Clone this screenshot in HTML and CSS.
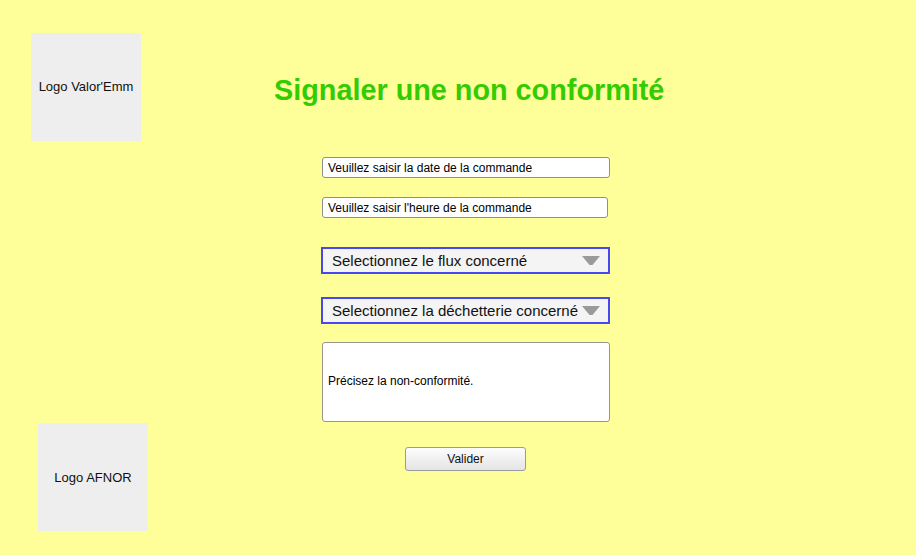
FILE: index.html
```html
<!DOCTYPE html>
<html lang="fr">
<head>
<meta charset="utf-8">
<title>Signaler une non conformité</title>
<link rel="stylesheet" href="styles.css">
</head>
<body>
<div class="page">
  <aside class="logos">
    <div class="logo logo-valor">Logo Valor'Emm</div>
    <div class="logo logo-afnor">Logo AFNOR</div>
  </aside>
  <main class="main">
    <h1 class="title">Signaler une non conformité</h1>
    <form class="form">
      <input class="field field-date" type="text" value="Veuillez saisir la date de la commande">
      <input class="field field-hour" type="text" value="Veuillez saisir l'heure de la commande">
      <div class="select-wrap select-flux">
        <select class="select"><option>Selectionnez le flux concerné</option></select>
        <svg class="arrow" width="18" height="9" viewBox="0 0 18 9"><path d="M0 0 H18 L10.5 9 H7.5 Z" fill="#9a9a9a"/></svg>
      </div>
      <div class="select-wrap select-dech">
        <select class="select"><option>Selectionnez la déchetterie concerné</option></select>
        <svg class="arrow" width="18" height="9" viewBox="0 0 18 9"><path d="M0 0 H18 L10.5 9 H7.5 Z" fill="#9a9a9a"/></svg>
      </div>
      <textarea class="area">Précisez la non-conformité.</textarea>
      <button class="btn" type="button">Valider</button>
    </form>
  </main>
</div>
</body>
</html>
```

FILE: styles.css
```css
html, body {
  margin: 0;
  padding: 0;
  background: #ffff99;
  font-family: "Liberation Sans", Arial, sans-serif;
  color: #111;
}
.page {
  display: flex;
  height: 555px;
}
.logos {
  width: 274px;
  display: flex;
  flex-direction: column;
  align-items: flex-start;
  padding-top: 33px;
  box-sizing: border-box;
}
.logo {
  width: 110px;
  height: 108px;
  background: #eeeeee;
  display: flex;
  align-items: center;
  justify-content: center;
  font-size: 13px;
  color: #111;
  box-sizing: border-box;
}
.logo-valor {
  margin-left: 31px;
  padding-bottom: 1px;
}
.logo-afnor {
  margin-left: 38px;
  margin-top: 282px;
}
.main {
  display: flex;
  flex-direction: column;
  padding-top: 74px;
}
.title {
  margin: 0;
  font-size: 28.8px;
  line-height: 33px;
  font-weight: bold;
  color: #33cc00;
}
.form {
  display: flex;
  flex-direction: column;
  align-items: flex-start;
  margin-left: 48px;
  margin-top: 50px;
  width: 288px;
}
.field {
  box-sizing: border-box;
  height: 21px;
  border: 1px solid #8f8f8f;
  border-radius: 3px;
  background: #fff;
  font-family: "Liberation Sans", Arial, sans-serif;
  font-size: 12px;
  color: #000;
  padding: 0 5px;
  margin: 0;
  outline: none;
}
.field-date {
  width: 288px;
}
.field-hour {
  width: 286px;
  margin-top: 19px;
}
.select-wrap {
  position: relative;
  margin-left: -1px;
  width: 289px;
  height: 27px;
}
.select-flux {
  margin-top: 29px;
}
.select-dech {
  margin-top: 23px;
}
.select {
  -webkit-appearance: none;
  appearance: none;
  box-sizing: border-box;
  width: 289px;
  height: 27px;
  margin: 0;
  border: 2px solid #4848f0;
  border-radius: 0;
  background: #f4f4f4;
  font-family: "Liberation Sans", Arial, sans-serif;
  font-size: 15px;
  color: #111;
  padding: 0 30px 0 9px;
  outline: none;
}
.arrow {
  position: absolute;
  right: 10px;
  top: 9px;
  pointer-events: none;
}
.area {
  box-sizing: border-box;
  width: 288px;
  height: 80px;
  margin-top: 18px;
  border: 1px solid #9a948c;
  border-radius: 3px;
  background: #fff;
  font-family: "Liberation Sans", Arial, sans-serif;
  font-size: 12px;
  color: #000;
  padding: 31px 5px 0;
  resize: none;
  outline: none;
}
.btn {
  box-sizing: border-box;
  width: 121px;
  height: 24px;
  margin-top: 25px;
  margin-left: 83px;
  border: 1px solid #9a9a9a;
  border-radius: 3px;
  background: linear-gradient(#fdfdfd, #e4e4e4);
  font-family: "Liberation Sans", Arial, sans-serif;
  font-size: 12px;
  color: #111;
  padding: 0;
}
```
